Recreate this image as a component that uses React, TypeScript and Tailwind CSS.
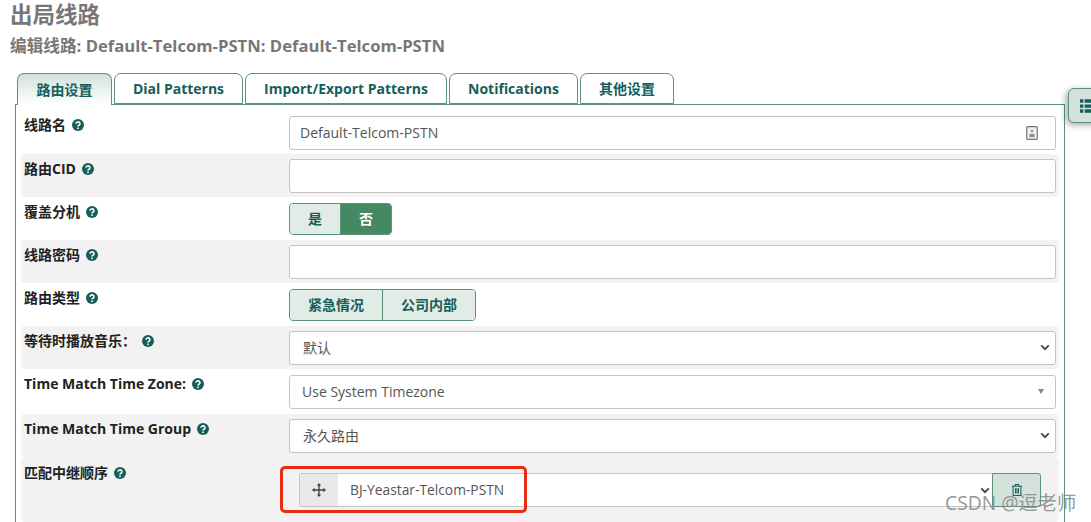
import { Fragment } from "react";

const font = { fontFamily: '"Open Sans", "Noto Sans CJK SC", sans-serif' };

function Help() {
  return (
    <svg viewBox="0 0 24 24" className="inline-block w-[12px] h-[12px] ml-[6px] align-[-1px]">
      <circle cx="12" cy="12" r="12" fill="#155e5a" />
      <path d="M8 9.500a4 3.600 0 1 1 6 3c-1.400.8-2 1.300-2 2.500" fill="none" stroke="#fff" strokeWidth="3" />
      <rect x="10.400" y="17" width="3.200" height="3.200" fill="#fff" />
    </svg>
  );
}

function Row({ label, gray, children, h = "h-[43px]", labelPt = "pt-[5px]" }: { label: string; gray?: boolean; children: React.ReactNode; h?: string; labelPt?: string }) {
  return (
    <div className={`flex ${h} rounded-[4px] ${gray ? "bg-[#f2f2f2]" : "bg-white"}`}>
      <div className={`w-[268px] shrink-0 pl-[3px] ${labelPt} text-[14px] leading-[20px] font-bold text-[#222]`}>
        {label}
        <Help />
      </div>
      <div className="flex-1 min-w-0 pt-[5px] pr-[3px]">{children}</div>
    </div>
  );
}

function Field({ children, className = "" }: { children?: React.ReactNode; className?: string }) {
  return (
    <div className={`h-[34px] pb-[1px] flex items-center justify-between rounded-[3px] border border-[#c4c4c4] bg-white text-[14px] text-[#555] ${className}`}>
      {children}
    </div>
  );
}

function Chevron() {
  return (
    <svg viewBox="0 0 12 8" className="w-[10px] h-[7px]">
      <path d="M1.500 1.500 6 6l4.500-4.500" fill="none" stroke="#444" strokeWidth="2.200" />
    </svg>
  );
}

function Toggle({ items, active }: { items: string[]; active?: number }) {
  return (
    <div className="inline-flex h-[32px] mt-[1px] rounded-[4px] border border-[#5a9377] overflow-hidden text-[14px] font-bold">
      {items.map((t, i) => (
        <Fragment key={t}>
          {i > 0 && <div className="w-px bg-[#5a9377]" />}
          <div
            className={`flex items-center justify-center pb-[2px] ${t.length === 1 ? "w-[50px]" : "w-[92px]"} ${
              i === active ? "bg-[#458962] text-white" : "bg-[#e1ece7] text-[#155e5a]"
            }`}
          >
            {t}
          </div>
        </Fragment>
      ))}
    </div>
  );
}

const tabs = [
  { t: "路由设置", w: "w-[94px]", on: true },
  { t: "Dial Patterns", w: "w-[129px]" },
  { t: "Import/Export Patterns", w: "w-[202px]" },
  { t: "Notifications", w: "w-[129px]" },
  { t: "其他设置", w: "w-[94px]" },
];

export default function App() {
  return (
    <div className="relative w-[1091px] h-[522px] overflow-hidden bg-white" style={font}>
      <div className="pl-[10px] pt-[1px] text-[#777] font-bold">
        <h1 className="text-[22.500px] leading-[28px]">出局线路</h1>
        <h2 className="mt-[7px] text-[16.650px] leading-[20px]">编辑线路: Default-Telcom-PSTN: Default-Telcom-PSTN</h2>
      </div>

      <div className="ml-[17px] mt-[17px] flex gap-[2px] h-[31px] relative z-10">
        {tabs.map((tab) => (
          <div
            key={tab.t}
            className={`${tab.w} flex items-center justify-center rounded-t-[7px] border border-[#5a9377] text-[14px] font-bold text-[#155e5a] ${
              tab.on ? "border-b-0 h-[32px] w-[95px] bg-gradient-to-b from-[#d3e2db] to-white" : "bg-white"
            }`}
          >
            {tab.t}
          </div>
        ))}
      </div>

      <div className="ml-[15px] w-[1050px] h-[500px] border border-[#5a9377] pl-[5px] pr-[5px] pt-[6px]">
        <Row label="线路名" labelPt="pt-[4px]">
          <Field className="pl-[10px] pr-[17px]">
            Default-Telcom-PSTN
            <svg viewBox="0 0 12 14" className="w-[12px] h-[14px]">
              <rect x="0.700" y="0.700" width="10.600" height="12.600" rx="1" fill="#eee" stroke="#777" strokeWidth="1.200" />
              <path d="M6 3l1.500 3h-3zM3.500 8h5v3h-5z" fill="#888" />
            </svg>
          </Field>
        </Row>
        <Row label="路由CID" gray>
          <Field />
        </Row>
        <Row label="覆盖分机">
          <Toggle items={["是", "否"]} active={1} />
        </Row>
        <Row label="线路密码" gray>
          <Field />
        </Row>
        <Row label="路由类型">
          <Toggle items={["紧急情况", "公司内部"]} />
        </Row>
        <Row label="等待时播放音乐：" gray>
          <Field className="pl-[13px] pr-[5px]">
            默认
            <Chevron />
          </Field>
        </Row>
        <Row label="Time Match Time Zone:" h="h-[45px]">
          <Field className="pl-[12px] pr-[11px] mt-[1px]">
            Use System Timezone
            <span className="w-0 h-0 border-x-[3.500px] border-x-transparent border-t-[5px] border-t-[#888]" />
          </Field>
        </Row>
        <Row label="Time Match Time Group" gray h="h-[44px]">
          <Field className="pl-[13px] pr-[5px]">
            永久路由
            <Chevron />
          </Field>
        </Row>
        <Row label="匹配中继顺序" gray h="h-[64px]">
          <div className="flex mt-[10px] ml-[10px] mr-[15px] h-[34px]">
            <div className="flex-1 flex items-center rounded-l-[3px] border border-r-0 border-[#c4c4c4] bg-white text-[13.800px] text-[#555]">
              <div className="w-[38px] h-full flex items-center justify-center bg-[#e9e9e9] border-r border-[#e9e9e9] text-[#444]">
                <svg viewBox="0 0 16 16" className="w-[14px] h-[14px]">
                  <path d="M8 0l2.500 3h-1.700v4.200H13V5.500L16 8l-3 2.500V8.800H8.800V13h1.700L8 16l-2.500-3h1.700V8.800H3v1.700L0 8l3-2.500v1.700h4.200V3H5.500z" fill="#444" />
                </svg>
              </div>
              <span className="pl-[12px] flex-1">BJ-Yeastar-Telcom-PSTN</span>
              <span className="mr-[2px] flex">
                <Chevron />
              </span>
            </div>
            <div className="w-[49px] flex items-center justify-center rounded-r-[3px] border border-[#5a9377] bg-[#d3e2db]">
              <svg viewBox="0 0 14 16" className="w-[12px] h-[14px]">
                <path d="M1 3.500h12M5 3.500V1.500h4v2M2.500 3.500v11h9v-11M5.300 6v6M7 6v6M8.700 6v6" fill="none" stroke="#155e5a" strokeWidth="1.200" />
              </svg>
            </div>
          </div>
        </Row>
      </div>

      <div className="absolute left-[1068px] top-[88px] w-[40px] h-[35px] flex items-center pl-[11px] rounded-[6px] border border-[#5a9377] bg-[#d3e2db] shadow-[-2px_2px_6px_rgba(0,0,0,0.35)]">
        <svg viewBox="0 0 12 12" className="w-[16px] h-[16px] shrink-0">
          <path d="M0 1h2.500v2.500H0zM3.500 1H12v2.500H3.500zM0 4.800h2.500v2.500H0zM3.500 4.800H12v2.500H3.500zM0 8.500h2.500V11H0zM3.500 8.500H12V11H3.500z" fill="#155e5a" />
        </svg>
      </div>

      <div className="absolute left-[280px] top-[466px] w-[247px] h-[47px] rounded-[5px] border-[3px] border-[#ea2a12]" />

      <div className="absolute left-[945px] top-[491px] text-[19.300px] leading-[24px] text-[#8a8a8a]/90">CSDN @逗老师</div>
    </div>
  );
}
